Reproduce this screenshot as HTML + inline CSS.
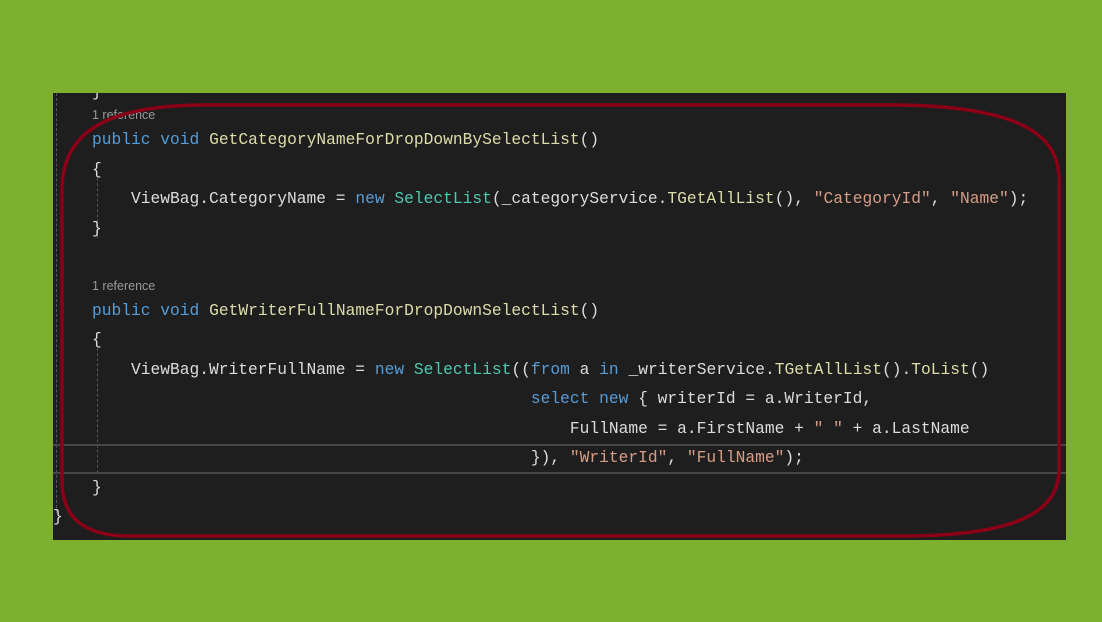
<!DOCTYPE html>
<html><head><style>
body{margin:0;width:1102px;height:622px;background:#7db02f;position:relative;overflow:hidden}
#p{position:absolute;left:53px;top:93px;width:1013px;height:447px;background:#1e1e1e;overflow:hidden}
.l{position:absolute;left:0;white-space:pre;font-family:"Liberation Mono",monospace;font-size:16.25px;color:#dcdcdc;line-height:20px}
.r{position:absolute;font-family:"Liberation Sans",sans-serif;font-size:12.5px;color:#999;left:39px}
.k{color:#569cd6}.m{color:#dcdcaa}.c{color:#4ec9b0}.s{color:#d69d85}
.g{position:absolute;border-left:1px dashed #555}
</style></head><body>
<div id="p">
<div class="g" style="left:3px;top:0;height:420px"></div>
<div class="g" style="left:44px;top:85px;height:60px"></div>
<div class="g" style="left:44px;top:255px;height:125px"></div>
<div style="position:absolute;left:0;top:351px;width:1013px;height:26px;border-top:2px solid #464646;border-bottom:2px solid #464646"></div>
<div class="l" style="top:-11px">    }</div>
<div class="r" style="top:15px">1 reference</div>
<div class="l" style="top:37px">    <span class="k">public</span> <span class="k">void</span> <span class="m">GetCategoryNameForDropDownBySelectList</span>()</div>
<div class="l" style="top:67px">    {</div>
<div class="l" style="top:96px">        ViewBag.CategoryName = <span class="k">new</span> <span class="c">SelectList</span>(_categoryService.<span class="m">TGetAllList</span>(), <span class="s">"CategoryId"</span>, <span class="s">"Name"</span>);</div>
<div class="l" style="top:126px">    }</div>
<div class="r" style="top:186px">1 reference</div>
<div class="l" style="top:208px">    <span class="k">public</span> <span class="k">void</span> <span class="m">GetWriterFullNameForDropDownSelectList</span>()</div>
<div class="l" style="top:237px">    {</div>
<div class="l" style="top:267px">        ViewBag.WriterFullName = <span class="k">new</span> <span class="c">SelectList</span>((<span class="k">from</span> a <span class="k">in</span> _writerService.<span class="m">TGetAllList</span>().<span class="m">ToList</span>()</div>
<div class="l" style="top:296px">                                                 <span class="k">select</span> <span class="k">new</span> { writerId = a.WriterId,</div>
<div class="l" style="top:326px">                                                     FullName = a.FirstName + <span class="s">" "</span> + a.LastName</div>
<div class="l" style="top:355px">                                                 }), <span class="s">"WriterId"</span>, <span class="s">"FullName"</span>);</div>
<div class="l" style="top:385px">    }</div>
<div class="l" style="top:414px">}</div>
</div>
<svg style="position:absolute;left:0;top:0" width="1102" height="622"><path d="M62,190 C62,130 110,106 200,105 L900,105 C1030,107 1059,140 1059,180 L1059,470 C1059,515 1010,536 900,536 L130,536 C80,536 62,515 62,480 Z" fill="none" stroke="#8b0016" stroke-width="3.5"/></svg>
</body></html>
